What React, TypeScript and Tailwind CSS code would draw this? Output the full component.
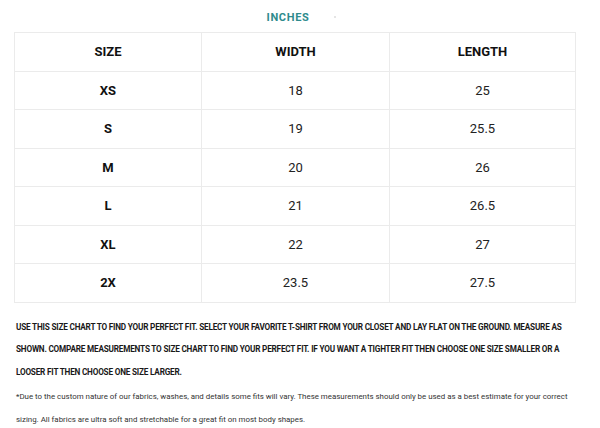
const rows = [
  { size: "XS", width: "18", length: "25" },
  { size: "S", width: "19", length: "25.5" },
  { size: "M", width: "20", length: "26" },
  { size: "L", width: "21", length: "26.5" },
  { size: "XL", width: "22", length: "27" },
  { size: "2X", width: "23.5", length: "27.5" },
];

export default function App() {
  return (
    <div className="w-[600px] h-[428px] bg-white overflow-hidden font-['Roboto',sans-serif] text-[#111]">
      <div className="flex justify-center pt-[11px] h-[32px]">
        <span className="relative text-[11px] font-bold tracking-[0.06em] text-[#2e8b8d] leading-[14px] ml-[-24px]">
          INCHES
          <span className="absolute left-[67px] top-[5px] w-[2px] h-[2px] rounded-full bg-[#ddd]" />
        </span>
      </div>

      <table className="ml-[14px] w-[562px] border-collapse table-fixed">
        <thead>
          <tr className="h-[38.5px]">
            <th className="w-[187px] border border-[#ebebeb] text-[13px] font-bold">SIZE</th>
            <th className="w-[188px] border border-[#ebebeb] text-[13px] font-bold">WIDTH</th>
            <th className="border border-[#ebebeb] text-[13px] font-bold">LENGTH</th>
          </tr>
        </thead>
        <tbody>
          {rows.map((r) => (
            <tr key={r.size} className="h-[38.5px]">
              <td className="border border-[#ebebeb] text-center text-[13px] font-bold">{r.size}</td>
              <td className="border border-[#ebebeb] text-center text-[13px] text-[#222]">{r.width}</td>
              <td className="border border-[#ebebeb] text-center text-[13px] text-[#222]">{r.length}</td>
            </tr>
          ))}
        </tbody>
      </table>

      <p className="ml-[16px] mt-[13px] text-[8.2px] font-bold leading-[22.5px] text-[#1a1a1a] tracking-[-0.024em] whitespace-nowrap">
        USE THIS SIZE CHART TO FIND YOUR PERFECT FIT. SELECT YOUR FAVORITE T-SHIRT FROM YOUR CLOSET AND LAY FLAT ON THE GROUND. MEASURE AS
        <br />
        SHOWN. COMPARE MEASUREMENTS TO SIZE CHART TO FIND YOUR PERFECT FIT. IF YOU WANT A TIGHTER FIT THEN CHOOSE ONE SIZE SMALLER OR A
        <br />
        LOOSER FIT THEN CHOOSE ONE SIZE LARGER.
      </p>

      <p className="ml-[16px] mt-[3px] text-[7.9px] leading-[22.5px] text-[#333] whitespace-nowrap">
        *Due to the custom nature of our fabrics, washes, and details some fits will vary. These measurements should only be used as a best estimate for your correct
        <br />
        sizing. All fabrics are ultra soft and stretchable for a great fit on most body shapes.
      </p>
    </div>
  );
}
